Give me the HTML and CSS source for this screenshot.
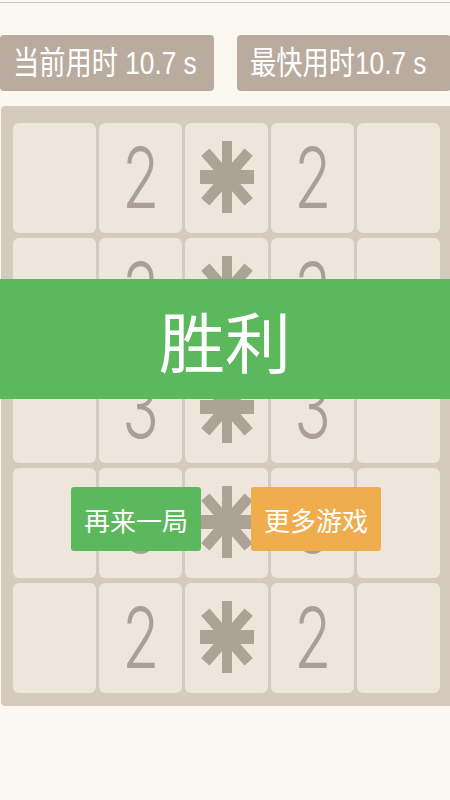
FILE: index.html
```html
<!DOCTYPE html>
<html lang="zh-CN">

<head>
    <meta charset="UTF-8">
    <meta name="viewport" content="width=device-width, initial-scale=1.0">
    <title>扫雷</title>
    <link rel="stylesheet" href="styles.css">
</head>

<body>
    <div class="topline"></div>

    <!-- 用时 -->
    <div class="stats">
        <div class="stat"><span>当前用时 10.7 s</span></div>
        <div class="stat"><span>最快用时10.7 s</span></div>
    </div>

    <!-- 棋盘 -->
    <div class="board">
        <div class="grid" id="grid"></div>

        <div class="banner">胜利</div>
        <div class="actions">
            <button class="btn btn-green">再来一局</button>
            <button class="btn btn-orange">更多游戏</button>
        </div>
    </div>

    <script>
        // 棋盘数据: 0 空, -1 雷, 其他为数字
        const cells = [
            [0, 2, -1, 2, 0],
            [0, 3, -1, 3, 0],
            [0, 3, -1, 3, 0],
            [0, 3, -1, 3, 0],
            [0, 2, -1, 2, 0]
        ];

        const star = '<svg class="mine" viewBox="-30 -38 60 76">' +
            '<rect x="-5" y="-36" width="10" height="72"/>' +
            '<rect x="-27" y="-7" width="54" height="14"/>' +
            '<rect x="-5.5" y="-33" width="11" height="66" transform="rotate(41)"/>' +
            '<rect x="-5.5" y="-33" width="11" height="66" transform="rotate(-41)"/>' +
            '</svg>';

        const grid = document.getElementById('grid');
        cells.forEach(row => {
            row.forEach(v => {
                const cell = document.createElement('div');
                cell.className = 'cell';
                if (v === -1) {
                    cell.innerHTML = star;
                } else if (v > 0) {
                    cell.innerHTML = '<span class="num">' + v + '</span>';
                }
                grid.appendChild(cell);
            });
        });
    </script>
</body>

</html>
```

FILE: styles.css
```css
body {
    margin: 0;
    background-color: #fbf8f1;
    font-family: 'Liberation Sans', 'Noto Sans CJK SC', sans-serif;
    overflow: hidden;
}

.topline {
    height: 2px;
    border-bottom: 1px solid #cdc8c1;
}

.stats {
    display: flex;
    gap: 23px;
    margin-top: 32px;
}

.stat {
    width: 214px;
    min-width: 0;
    flex-shrink: 0;
    height: 56px;
    line-height: 56px;
    padding-left: 13px;
    box-sizing: border-box;
    background-color: #b9ac9f;
    border-radius: 4px;
    color: white;
    font-size: 32px;
    white-space: nowrap;
    overflow: hidden;
}

.stat span {
    display: inline-block;
    transform: scaleX(0.82);
    transform-origin: left center;
}

.board {
    position: relative;
    margin: 15px 0 0 1px;
    padding: 17px 0 13px 12px;
    background-color: #d4cabe;
    border-radius: 4px 0 0 4px;
}

.grid {
    display: grid;
    grid-template-columns: repeat(5, 83px);
    grid-auto-rows: 110px;
    column-gap: 3px;
    row-gap: 5px;
}

.cell {
    display: flex;
    align-items: center;
    justify-content: center;
    background-color: #eee5db;
    border-radius: 6px;
}

.num {
    display: inline-block;
    font-family: 'Inter', sans-serif;
    font-weight: 300;
    font-size: 84px;
    color: #a99f94;
    transform: scaleX(0.72);
    margin-top: -2px;
}

.mine {
    width: 60px;
    height: 76px;
    fill: #aca397;
    margin-top: -2px;
}

.banner {
    position: absolute;
    left: -1px;
    right: 0;
    top: 173px;
    height: 120px;
    line-height: 120px;
    background-color: #5cb85c;
    color: white;
    text-align: center;
    font-size: 66px;
    font-family: 'Noto Sans CJK SC', sans-serif;
}

.actions {
    position: absolute;
    top: 381px;
    left: 70px;
    display: flex;
    gap: 50px;
}

.btn {
    width: 130px;
    height: 64px;
    border: none;
    border-radius: 3px;
    color: white;
    font-size: 26px;
    font-family: 'Noto Sans CJK SC', sans-serif;
    padding: 0;
}

.btn-green {
    background-color: #5cb85c;
}

.btn-orange {
    background-color: #f0ad4e;
}
```
